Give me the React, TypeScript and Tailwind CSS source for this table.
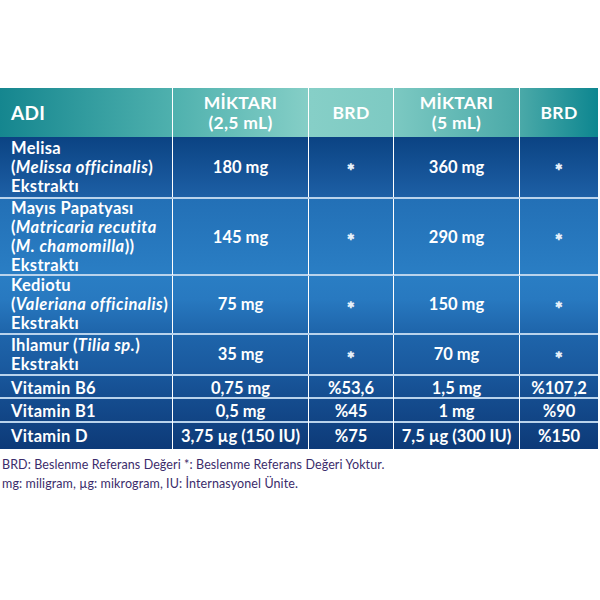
import React from 'react';

const cols = 'grid grid-cols-[172px_136px_85px_126px_79px]';

type Row = {
  name: React.ReactNode;
  a: string;
  b: string;
  c: string;
  d: string;
  h: string;
};

const rows: Row[] = [
  {
    name: (
      <>
        Melisa
        <br />(<i className="tracking-[0.5px]">Melissa officinalis</i>)
        <br />Ekstraktı
      </>
    ),
    a: '180 mg',
    b: '*',
    c: '360 mg',
    d: '*',
    h: 'h-[60px]',
  },
  {
    name: (
      <>
        Mayıs Papatyası
        <br />(<i className="tracking-[0.5px]">Matricaria recutita</i>
        <br />(<i className="tracking-[0.5px]">M. chamomilla</i>))
        <br />Ekstraktı
      </>
    ),
    a: '145 mg',
    b: '*',
    c: '290 mg',
    d: '*',
    h: 'h-[77px]',
  },
  {
    name: (
      <>
        Kediotu
        <br />(<i className="tracking-[0.5px]">Valeriana officinalis</i>)
        <br />Ekstraktı
      </>
    ),
    a: '75 mg',
    b: '*',
    c: '150 mg',
    d: '*',
    h: 'h-[59px]',
  },
  {
    name: (
      <>
        Ihlamur (<i className="tracking-[0.5px]">Tilia sp.</i>)
        <br />Ekstraktı
      </>
    ),
    a: '35 mg',
    b: '*',
    c: '70 mg',
    d: '*',
    h: 'h-[41px]',
  },
  { name: 'Vitamin B6', a: '0,75 mg', b: '%53,6', c: '1,5 mg', d: '%107,2', h: 'h-[23px]' },
  { name: 'Vitamin B1', a: '0,5 mg', b: '%45', c: '1 mg', d: '%90', h: 'h-[24px]' },
  { name: 'Vitamin D', a: '3,75 µg (150 IU)', b: '%75', c: '7,5 µg (300 IU)', d: '%150', h: 'h-[28px]' },
];

function Cell({ children, star }: { children: React.ReactNode; star?: boolean }) {
  return (
    <div
      className={`flex items-center justify-center border-l border-white text-center ${
        star ? 'text-[9px] text-[#e6f0fa]' : 'text-[16.5px]'
      }`}
    >
      {children}
    </div>
  );
}

export default function App() {
  return (
    <div className="w-[600px] h-[600px] bg-white pt-[88px] font-['Lato',sans-serif]">
      <div className="w-[598px] text-white">
        {/* header */}
        <div
          className={`${cols} h-[49px] font-bold text-[17.5px] leading-[20px] tracking-[0.3px] bg-[linear-gradient(to_right,#15868f_0%,#4fb1ae_29%,#86cfc7_52%,#7ecac3_65%,#4aa9a8_87%,#0d8690_100%)]`}
        >
          <div className="flex items-center pl-[11px] text-[19px]">ADI</div>
          <div className="flex flex-col items-center justify-center border-l border-white">
            <span>MİKTARI</span>
            <span>(2,5 mL)</span>
          </div>
          <div className="flex items-center justify-center border-l border-white">BRD</div>
          <div className="flex flex-col items-center justify-center border-l border-white">
            <span>MİKTARI</span>
            <span>(5 mL)</span>
          </div>
          <div className="flex items-center justify-center border-l border-white">BRD</div>
        </div>

        {/* body */}
        <div className="font-bold bg-[linear-gradient(to_bottom,#0b4383_0%,#1d5fa5_19%,#2370b6_20%,#2a7ec4_44%,#2879c0_52%,#1f66ac_62%,#1a5a9f_74%,#144b8d_85%,#0d3a78_100%)]">
          {rows.map((r, i) => (
            <div
              key={i}
              className={`${cols} ${r.h} ${i > 0 ? 'border-t-2 border-[#b9d3ec]' : ''}`}
            >
              <div className="flex items-center pl-[11px] text-[16.5px] leading-[19px] tracking-[0.3px]">
                <div>{r.name}</div>
              </div>
              <Cell>{r.a}</Cell>
              <Cell star={r.b === '*'}>{r.b === '*' ? '✱' : r.b}</Cell>
              <Cell>{r.c}</Cell>
              <Cell star={r.d === '*'}>{r.d === '*' ? '✱' : r.d}</Cell>
            </div>
          ))}
        </div>
      </div>

      {/* footer */}
      <div className="pt-[6px] pl-[2px] text-[12.5px] leading-[19px] tracking-[0.1px] text-[#3b2c6b]">
        <p>BRD: Beslenme Referans Değeri *: Beslenme Referans Değeri Yoktur.</p>
        <p>mg: miligram, µg: mikrogram, IU: İnternasyonel Ünite.</p>
      </div>
    </div>
  );
}
